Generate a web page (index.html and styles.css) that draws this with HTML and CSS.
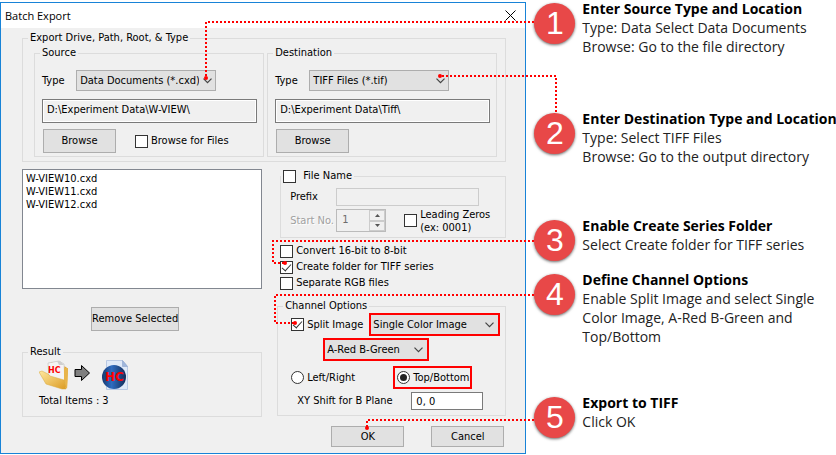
FILE: index.html
```html
<!DOCTYPE html>
<html lang="en">
<head>
    <meta charset="UTF-8">
    <meta name="viewport" content="width=device-width, initial-scale=1.0">
    <title>Batch Export</title>
    <link rel="stylesheet" href="styles.css">
</head>
<body>
    <div class="page">
        <form class="dialog">
            <div class="titlebar">
                <h1>Batch Export</h1>
                <button type="button" class="close" aria-label="Close">
                    <svg width="11" height="11" viewBox="0 0 11 11"><path d="M.5 .5l10 10M10.5 .5l-10 10" stroke="#000" fill="none"/></svg>
                </button>
            </div>
            <div class="content">
                <fieldset class="paths">
                    <legend>Export Drive, Path, Root, &amp; Type</legend>
                    <div class="path-groups">
                        <fieldset class="path-group">
                            <legend>Source</legend>
                            <div class="row type-row">
                                <label for="sourceType">Type</label>
                                <span class="select">
                                    <select id="sourceType"><option>Data Documents (*.cxd)</option></select>
                                    <svg width="9" height="6" viewBox="0 0 9 6"><path d="M.5 .7l4 4 4-4"/></svg>
                                </span>
                            </div>
                            <input class="path" type="text" aria-label="Source path" value="D:\Experiment Data\W-VIEW\" readonly>
                            <div class="row browse-row">
                                <button type="button" class="btn browse">Browse</button>
                                <label class="check"><input type="checkbox">Browse for Files</label>
                            </div>
                        </fieldset>
                        <fieldset class="path-group">
                            <legend>Destination</legend>
                            <div class="row type-row">
                                <label for="destType">Type</label>
                                <span class="select">
                                    <select id="destType"><option>TIFF Files (*.tif)</option></select>
                                    <svg width="9" height="6" viewBox="0 0 9 6"><path d="M.5 .7l4 4 4-4"/></svg>
                                </span>
                            </div>
                            <input class="path" type="text" aria-label="Destination path" value="D:\Experiment Data\Tiff\" readonly>
                            <div class="row browse-row">
                                <button type="button" class="btn browse">Browse</button>
                            </div>
                        </fieldset>
                    </div>
                </fieldset>

                <div class="columns">
                    <div class="left">
                        <ul class="files">
                            <li>W-VIEW10.cxd</li>
                            <li>W-VIEW11.cxd</li>
                            <li>W-VIEW12.cxd</li>
                        </ul>
                        <button type="button" class="btn remove">Remove Selected</button>
                        <fieldset class="result">
                            <legend>Result</legend>
                            <div class="icons">
                                <svg width="30" height="30" viewBox="0 0 30 30">
                                    <defs>
                                        <linearGradient id="folder" x1="0" y1="0" x2="1" y2="1">
                                            <stop offset="0" stop-color="#ffe9a0"/>
                                            <stop offset="1" stop-color="#dc9b22"/>
                                        </linearGradient>
                                    </defs>
                                    <path d="M10 4l3-2 14 5 2 2-1 19-4-2z" fill="#e3a83a"/>
                                    <path d="M9 3l11-2 5 3 1 20-16-6z" fill="#f4f4f4" stroke="#bdbdbd" stroke-width=".6"/>
                                    <path d="M18 1l3 0 4 4-5 0z" fill="#cfcfcf"/>
                                    <path d="M25 8l4 0-1 21-3-6z" fill="#e8b44a"/>
                                    <path d="M0 12l3-1 6 3 2 2 14 4 2 9-4 0-16-5z" fill="url(#folder)" stroke="#d9a83c" stroke-width=".5"/>
                                    <text x="9" y="13" class="hc-small">HC</text>
                                </svg>
                                <svg class="arrow" width="17" height="18" viewBox="0 0 17 18"><path d="M1 5.500h6.500V1.500L15.500 9l-8 7.500v-4H1z" fill="#808080" stroke="#000"/></svg>
                                <svg width="28" height="30" viewBox="0 0 28 30">
                                    <defs>
                                        <linearGradient id="ball" x1="0" y1="0" x2="1" y2="0">
                                            <stop offset="0" stop-color="#16386f"/>
                                            <stop offset=".4" stop-color="#2f6cc0"/>
                                            <stop offset="1" stop-color="#142c58"/>
                                        </linearGradient>
                                    </defs>
                                    <path d="M5.500 .5h16l5 6v23h-21z" fill="#dfe9f8" stroke="#b9c9e4"/>
                                    <path d="M21.500 .5v6h5z" fill="#9fb6dc" stroke="#8da5cd" stroke-width=".6"/>
                                    <circle cx="13" cy="17" r="12" fill="url(#ball)"/>
                                    <text x="4" y="21" class="hc">HC</text>
                                </svg>
                            </div>
                            <p>Total Items : 3</p>
                        </fieldset>
                    </div>

                    <div class="right">
                        <fieldset class="file-name">
                            <legend><label class="check"><input type="checkbox">File Name</label></legend>
                            <div class="row">
                                <label class="name" for="prefix">Prefix</label>
                                <input class="prefix" id="prefix" type="text" disabled>
                            </div>
                            <div class="row">
                                <label class="name off" for="startNo">Start No.</label>
                                <span class="spin">
                                    <input id="startNo" type="text" value="1" disabled>
                                    <span class="spin-buttons">
                                        <button type="button" aria-label="Up" disabled><svg width="5" height="3" viewBox="0 0 5 3"><path d="M0 3l2.500-3L5 3z"/></svg></button>
                                        <button type="button" aria-label="Down" disabled><svg width="5" height="3" viewBox="0 0 5 3"><path d="M0 0l2.500 3L5 0z"/></svg></button>
                                    </span>
                                </span>
                                <label class="check zeros"><input type="checkbox"><span>Leading Zeros<br>(ex: 0001)</span></label>
                            </div>
                        </fieldset>
                        <div class="options">
                            <label class="check"><input type="checkbox">Convert 16-bit to 8-bit</label>
                            <label class="check"><input type="checkbox" checked>Create folder for TIFF series</label>
                            <label class="check"><input type="checkbox">Separate RGB files</label>
                        </div>
                        <fieldset class="channel">
                            <legend>Channel Options</legend>
                            <div class="row split-row">
                                <label class="check"><input type="checkbox" checked>Split Image</label>
                                <span class="select marked">
                                    <select aria-label="Image mode"><option>Single Color Image</option></select>
                                    <svg width="9" height="6" viewBox="0 0 9 6"><path d="M.5 .7l4 4 4-4"/></svg>
                                </span>
                            </div>
                            <span class="select marked colors">
                                <select aria-label="Channel colors"><option>A-Red B-Green</option></select>
                                <svg width="9" height="6" viewBox="0 0 9 6"><path d="M.5 .7l4 4 4-4"/></svg>
                            </span>
                            <div class="row sides">
                                <label class="check"><input type="radio" name="side">Left/Right</label>
                                <label class="check marked"><input type="radio" name="side" checked>Top/Bottom</label>
                            </div>
                            <div class="row shift-row">
                                <label for="shift">XY Shift for B Plane</label>
                                <input id="shift" type="text" value="0, 0">
                            </div>
                        </fieldset>
                        <div class="actions">
                            <button type="button" class="btn">OK</button>
                            <button type="button" class="btn">Cancel</button>
                        </div>
                    </div>
                </div>
            </div>
        </form>

        <ol class="callouts">
            <li>
                <span class="num">1</span>
                <div>
                    <h2>Enter Source Type and Location</h2>
                    <p>Type: Data Select Data Documents</p>
                    <p>Browse: Go to the file directory</p>
                </div>
            </li>
            <li>
                <span class="num">2</span>
                <div>
                    <h2>Enter Destination Type and Location</h2>
                    <p>Type: Select TIFF Files</p>
                    <p>Browse: Go to the output directory</p>
                </div>
            </li>
            <li>
                <span class="num">3</span>
                <div>
                    <h2>Enable Create Series Folder</h2>
                    <p>Select Create folder for TIFF series</p>
                </div>
            </li>
            <li>
                <span class="num">4</span>
                <div>
                    <h2>Define Channel Options</h2>
                    <p>Enable Split Image and select Single Color Image, A-Red B-Green and Top/Bottom</p>
                </div>
            </li>
            <li>
                <span class="num">5</span>
                <div>
                    <h2>Export to TIFF</h2>
                    <p>Click OK</p>
                </div>
            </li>
        </ol>

        <!-- dotted lines from the numbers to the controls -->
        <svg class="lines" width="836" height="455" viewBox="0 0 836 455">
            <path d="M534 22H206V76"/>
            <path d="M556 112V76H442"/>
            <path d="M534 241H273V263H285"/>
            <path d="M534 295H275V323H295"/>
            <path d="M534 420H367V427"/>
            <circle cx="206" cy="78" r="2"/>
            <circle cx="440" cy="76" r="2"/>
            <circle cx="285" cy="263" r="2"/>
            <circle cx="295" cy="323" r="2"/>
            <circle cx="367" cy="428" r="2"/>
        </svg>
    </div>
</body>
</html>
```

FILE: styles.css
```css
* {
    box-sizing: border-box;
}
body {
    margin: 0;
    background-color: #fff;
    color: #000;
    font-family: "DejaVu Sans Condensed", "DejaVu Sans", Tahoma, sans-serif;
    font-size: 11px;
    line-height: 14px;
}
h1, h2, p, ul, ol {
    margin: 0;
    padding: 0;
}
.page {
    position: relative;
    display: grid;
    grid-template-columns: minmax(0, 17fr) minmax(0, 10fr);
    align-items: start;
}
input, select, button {
    font: inherit;
    color: inherit;
    margin: 0;
    border-radius: 0;
}

/* dialog */
.dialog {
    margin-top: 2px;
    border: 1px solid #1883d7;
    background-color: #f0f0f0;
}
.titlebar {
    display: flex;
    justify-content: space-between;
    align-items: center;
    height: 25px;
    padding: 0 9px 0 4px;
    background-color: #fff;
}
.titlebar h1 {
    font-family: "Open Sans", "Noto Sans", sans-serif;
    font-size: 11px;
    font-weight: normal;
}
.close {
    display: flex;
    padding: 0;
    border: none;
    background: none;
}
.content {
    padding: 3px 19px 6px 21px;
}
fieldset {
    min-width: 0;
    margin: 0;
    padding: 0 0 0 var(--indent);
    border: 1px solid #dcdcdc;
}
/* the legend starts near the border whatever the indent */
legend {
    margin-left: calc(5px - var(--indent));
    padding: 0 2px;
    line-height: 14px;
}
.row {
    display: flex;
    align-items: center;
}
.btn {
    height: 21px;
    padding: 0;
    border: 1px solid #adadad;
    background-color: #e1e1e1;
}
.select {
    position: relative;
    display: block;
}
.select select {
    display: block;
    appearance: none;
    width: 100%;
    height: 21px;
    padding: 0 16px 0 3px;
    border: 1px solid #adadad;
    background-color: #e1e1e1;
}
.select svg {
    position: absolute;
    right: 4px;
    top: 8px;
    fill: none;
    stroke: #444;
    stroke-width: 1.2;
}
.marked {
    border: 2px solid #f00;
}
.select.marked select {
    height: 19px;
    padding-left: 2px;
    border: none;
}
.select.marked svg {
    top: 7px;
}

/* check boxes and radios */
.check {
    display: flex;
    align-items: center;
    gap: 3px;
    white-space: nowrap;
}
.check input {
    appearance: none;
    display: grid;
    place-items: center;
    flex: none;
    width: 13px;
    height: 13px;
    border: 1px solid #333;
    background-color: #fff;
}
.check input[type="checkbox"]:checked::before {
    content: "";
    width: 4px;
    height: 8px;
    margin-bottom: 3px;
    border: solid #333;
    border-width: 0 1px 1px 0;
    transform: rotate(42deg);
}
.check input[type="radio"] {
    border-radius: 50%;
}
.check input[type="radio"]:checked::before {
    content: "";
    width: 7px;
    height: 7px;
    border-radius: 50%;
    background-color: #222;
}

/* source and destination */
.paths {
    --indent: 11px;
    padding-top: 1px;
    padding-right: 8px;
    padding-bottom: 4px;
}
.path-groups {
    display: grid;
    grid-template-columns: 1fr 1fr;
    gap: 3px;
}
.path-group {
    --indent: 7px;
    padding-top: 10px;
    padding-right: 6px;
    padding-bottom: 3px;
}
.type-row {
    justify-content: space-between;
}
.type-row .select {
    width: 140px;
    margin-right: 41px;
}
.path {
    display: block;
    width: 100%;
    height: 24px;
    margin: 8px 0 6px;
    padding: 0 4px 4px;
    border: 1px solid #7a7a7a;
    background-color: #f0f0f0;
    box-shadow: inset 0 0 0 1px #fff;
}
.browse-row {
    gap: 19px;
    padding-left: 1px;
}
.browse {
    width: 73px;
    height: 24px;
}

/* file list and result */
.columns {
    display: grid;
    grid-template-columns: 240fr 229fr;
    gap: 15px;
    margin-top: 7px;
}
.left {
    display: flex;
    flex-direction: column;
}
.files {
    height: 120px;
    padding: 2px 3px;
    border: 1px solid #828790;
    background-color: #fff;
    list-style: none;
    line-height: 13px;
}
.remove {
    align-self: center;
    width: 88px;
    height: 24px;
    margin: 18px 14px 14px 0;
    white-space: nowrap;
}
.result {
    --indent: 16px;
    padding-top: 1px;
    padding-bottom: 8px;
}
.icons {
    display: flex;
    gap: 5px;
    height: 30px;
}
.icons .arrow {
    margin: 4px 5px 0 0;
}
.hc, .hc-small {
    font-family: "DejaVu Sans", sans-serif;
    font-weight: bold;
    fill: #f00;
}
.hc {
    font-size: 12px;
}
.hc-small {
    font-size: 8px;
}
.result p {
    margin-top: 4px;
}

/* naming options */
.file-name {
    --indent: 9px;
    margin-left: 3px;
    padding-top: 5px;
    padding-bottom: 5px;
}
.file-name legend {
    margin-left: calc(0px - var(--indent));
}
.file-name legend .check {
    gap: 7px;
}
.file-name .row + .row {
    height: 23px;
    margin-top: 3px;
}
.name {
    flex: none;
    width: 46px;
}
.off {
    color: #a0a0a0;
    text-shadow: 1px 1px #fff;
    white-space: nowrap;
}
.prefix {
    width: 143px;
    height: 18px;
    border: 1px solid #ccc;
    background-color: #f0f0f0;
}
.spin {
    display: flex;
    width: 50px;
    height: 23px;
    border: 1px solid #bbb;
}
.spin input {
    flex: 1;
    min-width: 0;
    padding: 0 5px 2px;
    border: none;
    background: none;
    color: #6d6d6d;
}
.spin-buttons {
    display: grid;
    width: 16px;
}
.spin-buttons button {
    display: grid;
    place-items: center;
    padding: 0;
    border: 1px solid #ccc;
    background-color: #f0f0f0;
}
.spin-buttons svg {
    fill: #555;
}
.zeros {
    margin-left: 18px;
    line-height: 13px;
}
.options {
    margin: 5px 0 8px 3px;
}
.options .check {
    height: 16px;
}

/* channel options */
.channel {
    --indent: 13px;
    padding-right: 5px;
    padding-bottom: 5px;
}
.split-row {
    justify-content: space-between;
}
.split-row .select {
    width: 131px;
}
.colors {
    width: 106px;
    margin: 2px 0 5px 32px;
}
.sides {
    justify-content: space-between;
    padding-right: 28px;
}
.sides .marked {
    height: 23px;
    width: 79px;
    padding-left: 2px;
}
.shift-row {
    justify-content: space-between;
    margin-top: 3px;
    padding: 0 17px 0 6px;
}
.shift-row input {
    width: 72px;
    height: 18px;
    padding: 1px 4px 0;
    border: 1px solid #7a7a7a;
    background-color: #fff;
}
.actions {
    display: flex;
    justify-content: flex-end;
    gap: 27px;
    margin-top: 10px;
    padding-right: 2px;
}
.actions .btn {
    width: 73px;
}

/* numbered callouts */
.callouts {
    display: grid;
    grid-template-rows: 110px 107px 54px 123px auto;
    margin-top: -1px;
    padding-left: 8px;
    list-style: none;
    font-family: "Open Sans", "Noto Sans", sans-serif;
    font-size: 14px;
    line-height: 19px;
}
.callouts li {
    display: flex;
    gap: 7px;
}
.callouts h2 {
    font-size: 14px;
    line-height: 19px;
    white-space: nowrap;
}
.callouts p {
    color: #222;
}
.num {
    flex: none;
    width: 41px;
    height: 41px;
    margin-top: 4px;
    border-radius: 50%;
    background-color: #e84848;
    box-shadow: 0 1px 3px rgba(0, 0, 0, 0.6);
    color: #fff;
    font-family: "Liberation Sans", Arial, sans-serif;
    font-size: 32px;
    line-height: 41px;
    text-align: center;
}

.lines {
    position: absolute;
    left: 0;
    top: 0;
    pointer-events: none;
}
.lines path {
    fill: none;
    stroke: #f00;
    stroke-width: 2;
    stroke-dasharray: 2 2;
}
.lines circle {
    fill: #f00;
}
```
